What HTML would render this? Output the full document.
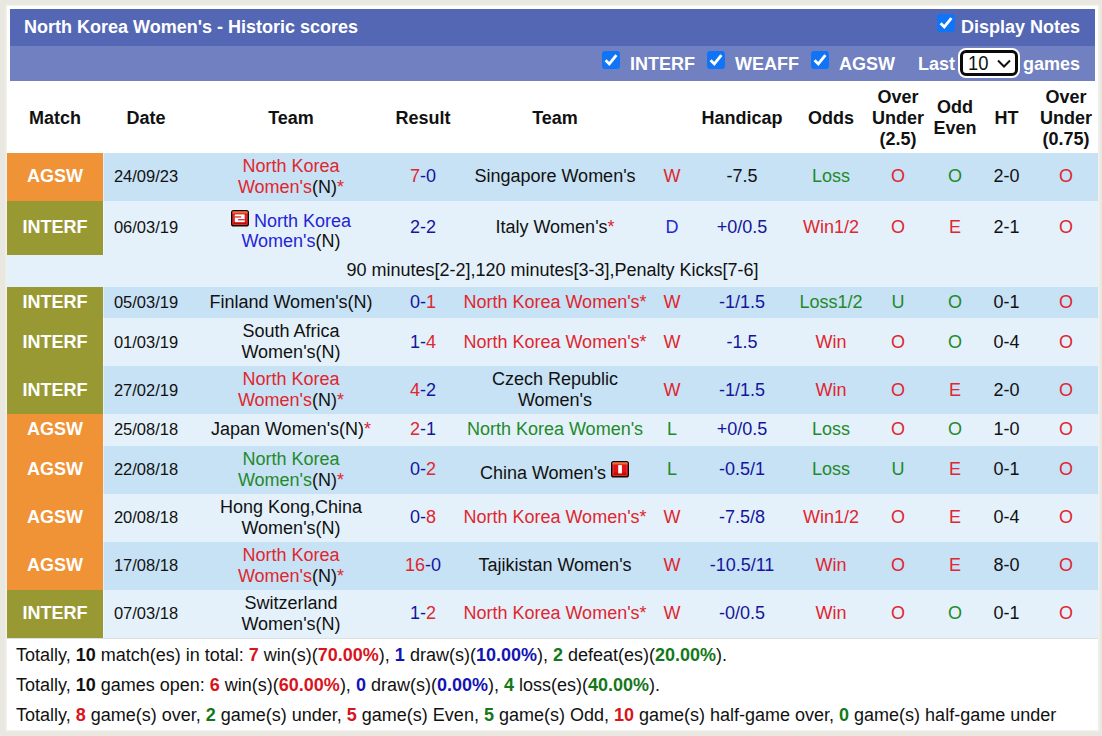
<!DOCTYPE html>
<html>
<head>
<meta charset="utf-8">
<title>North Korea Women's - Historic scores</title>
<style>
html,body{margin:0;padding:0;}
body{width:1102px;height:736px;overflow:hidden;background:#e9e8e0;font-family:"Liberation Sans",sans-serif;font-size:18px;color:#111;position:relative;}
#wrap{position:absolute;left:7px;top:6px;width:1091px;height:724px;background:#fff;box-shadow:0 0 0 1.5px #f1f0ea;}
#bar1{position:absolute;left:3px;top:3px;width:1085px;height:37px;background:#5467b5;}
#bar2{position:absolute;left:3px;top:40px;width:1085px;height:35px;background:#7080c1;}
.hb{position:absolute;color:#fff;font-weight:bold;font-size:18px;line-height:21px;white-space:nowrap;}
.cb{position:absolute;width:18px;height:18px;border-radius:3px;background:#1074f6;}
.cb svg{position:absolute;left:0;top:0;}
#sel{position:absolute;box-sizing:border-box;left:953px;top:43.6px;width:58px;height:26.6px;border:3px solid #0a0a0a;border-radius:6px;background:#fff;box-shadow:0 0 0 2px #fff;}
#sel span{position:absolute;left:4.8px;top:-1px;font-size:20px;line-height:23px;color:#111;display:inline-block;transform-origin:0 50%;transform:scaleX(0.92);}
#sel svg{position:absolute;left:33px;top:5px;}
table{position:absolute;left:0;top:75px;width:1091px;border-collapse:collapse;table-layout:fixed;}
td,th{padding:0;text-align:center;vertical-align:middle;line-height:21px;white-space:nowrap;overflow:visible;}
th{font-weight:bold;font-size:18px;color:#111;padding-top:2px;}
tr.u td{padding-bottom:2px;}
tr.u td.t2{padding-bottom:0;}
tr.h{height:72px;}
tr.a td{background:#c7e1f5;}
tr.b td{background:#e4f1fb;}
td.lg{color:#fff;font-weight:bold;}
tr td.ag{background:#f09236;}
tr td.in{background:#999933;}
td.d{font-size:16.5px;box-shadow:inset 1px 0 0 rgba(255,255,255,0.45);}
.r{color:#e0262e;}
.bl{color:#15159c;}
.bb{color:#2424d6;}
.g{color:#1f8a2a;}
.k{color:#111;}
#sum{position:absolute;left:9px;top:634px;font-size:18px;line-height:30px;color:#111;white-space:nowrap;}
#sum b.r{color:#d8141c;} #sum b.bl{color:#1414b4;} #sum b.g{color:#14781a;}
.ic{display:inline-block;width:18px;height:1px;position:relative;vertical-align:baseline;}
.ic svg{position:absolute;left:0;bottom:0.5px;}
.r2{display:block;line-height:20px;position:relative;top:3px;}
.r7{display:block;position:relative;top:4px;left:-0.5px;}
</style>
</head>
<body>
<div id="wrap">

<div id="bar1"></div>
<div id="bar2"></div>
<div class="hb" style="left:17px;top:11px;">North Korea Women's - Historic scores</div>

<div class="cb" style="left:930px;top:7.5px;height:18.5px;"><svg width="18" height="18" viewBox="0 0 18 18"><path d="M3.6 9.3 L7.3 12.9 L14.4 4.2" fill="none" stroke="#fff" stroke-width="2.8"/></svg></div>
<div class="hb" style="left:954px;top:11px;">Display Notes</div>

<div class="cb" style="left:595px;top:45px;"><svg width="18" height="18" viewBox="0 0 18 18"><path d="M3.6 9.3 L7.3 12.9 L14.4 4.2" fill="none" stroke="#fff" stroke-width="2.8"/></svg></div>
<div class="hb" style="left:623px;top:48px;">INTERF</div>
<div class="cb" style="left:700px;top:45px;"><svg width="18" height="18" viewBox="0 0 18 18"><path d="M3.6 9.3 L7.3 12.9 L14.4 4.2" fill="none" stroke="#fff" stroke-width="2.8"/></svg></div>
<div class="hb" style="left:728px;top:48px;">WEAFF</div>
<div class="cb" style="left:804px;top:45px;"><svg width="18" height="18" viewBox="0 0 18 18"><path d="M3.6 9.3 L7.3 12.9 L14.4 4.2" fill="none" stroke="#fff" stroke-width="2.8"/></svg></div>
<div class="hb" style="left:832px;top:48px;">AGSW</div>
<div class="hb" style="left:911px;top:48px;">Last</div>
<div id="sel"><span>10</span><svg width="16" height="12" viewBox="0 0 16 12"><path d="M2 2.5 L8 8.5 L14 2.5" fill="none" stroke="#111" stroke-width="2"/></svg></div>
<div class="hb" style="left:1016px;top:48px;">games</div>

<table>
<colgroup>
<col style="width:96px"><col style="width:86px"><col style="width:204px"><col style="width:60px"><col style="width:204px"><col style="width:30px"><col style="width:110px"><col style="width:68px"><col style="width:66px"><col style="width:48px"><col style="width:55px"><col style="width:64px">
</colgroup>
<tr class="h"><th>Match</th><th>Date</th><th>Team</th><th>Result</th><th>Team</th><th></th><th>Handicap</th><th>Odds</th><th>Over<br>Under<br>(2.5)</th><th>Odd<br>Even</th><th>HT</th><th>Over<br>Under<br>(0.75)</th></tr>

<tr class="a u" style="height:48px"><td class="lg ag">AGSW</td><td class="d">24/09/23</td><td class="t2"><span class="r">North Korea<br>Women's</span>(N)<span class="r">*</span></td><td><span class="r">7</span><span class="bl">-0</span></td><td>Singapore Women's</td><td class="r">W</td><td>-7.5</td><td class="g">Loss</td><td class="r">O</td><td class="g">O</td><td>2-0</td><td class="r">O</td></tr>

<tr class="b u" style="height:54px"><td class="lg in">INTERF</td><td class="d">06/03/19</td><td class="t2"><span class="r2"><span class="ic"><svg width="18" height="17" viewBox="0 0 18 17"><rect x="0" y="0" width="18" height="16.5" rx="2.6" fill="#160404"/><rect x="1.5" y="1.5" width="15" height="13.5" rx="0.8" fill="#e01616"/><rect x="1.5" y="1.5" width="15" height="1.1" fill="#f4a03c"/><rect x="1.5" y="2.6" width="15" height="0.9" fill="#ee5a2a"/><rect x="1.5" y="11.5" width="15" height="1.8" fill="#d00808"/><rect x="1.5" y="13.3" width="15" height="1.7" fill="#b80000"/><rect x="2" y="2" width="14" height="12.5" rx="0.6" fill="none" stroke="#ff9a8a" stroke-opacity="0.4" stroke-width="0.9"/><rect x="3.8" y="4.4" width="9.9" height="7.8" fill="#fff"/><rect x="3.8" y="6.4" width="6.4" height="1.1" fill="#c81010"/><rect x="7" y="9.2" width="6.7" height="1.1" fill="#c81010"/></svg></span> <span class="bb">North Korea<br>Women's</span>(N)</span></td><td><span class="bl">2-2</span></td><td>Italy Women's<span class="r">*</span></td><td class="bb">D</td><td class="bl">+0/0.5</td><td class="r">Win1/2</td><td class="r">O</td><td class="r">E</td><td>2-1</td><td class="r">O</td></tr>

<tr class="b u" style="height:32px"><td colspan="12">90 minutes[2-2],120 minutes[3-3],Penalty Kicks[7-6]</td></tr>

<tr class="a" style="height:31px"><td class="lg in">INTERF</td><td class="d">05/03/19</td><td>Finland Women's(N)</td><td><span class="bl">0-</span><span class="r">1</span></td><td class="r">North Korea Women's*</td><td class="r">W</td><td class="bl">-1/1.5</td><td class="g">Loss1/2</td><td class="g">U</td><td class="g">O</td><td>0-1</td><td class="r">O</td></tr>

<tr class="b" style="height:48px"><td class="lg in">INTERF</td><td class="d">01/03/19</td><td class="t2">South Africa<br>Women's(N)</td><td><span class="bl">1-</span><span class="r">4</span></td><td class="r">North Korea Women's*</td><td class="r">W</td><td class="bl">-1.5</td><td class="r">Win</td><td class="r">O</td><td class="g">O</td><td>0-4</td><td class="r">O</td></tr>

<tr class="a" style="height:48px"><td class="lg in">INTERF</td><td class="d">27/02/19</td><td class="t2"><span class="r">North Korea<br>Women's</span>(N)<span class="r">*</span></td><td><span class="r">4</span><span class="bl">-2</span></td><td class="t2">Czech Republic<br>Women's</td><td class="r">W</td><td class="bl">-1/1.5</td><td class="r">Win</td><td class="r">O</td><td class="r">E</td><td>2-0</td><td class="r">O</td></tr>

<tr class="b u" style="height:32px"><td class="lg ag">AGSW</td><td class="d">25/08/18</td><td>Japan Women's(N)<span class="r">*</span></td><td><span class="r">2</span><span class="bl">-1</span></td><td class="g">North Korea Women's</td><td class="g">L</td><td class="bl">+0/0.5</td><td class="g">Loss</td><td class="r">O</td><td class="g">O</td><td>1-0</td><td class="r">O</td></tr>

<tr class="a u" style="height:48px"><td class="lg ag">AGSW</td><td class="d">22/08/18</td><td class="t2"><span class="g">North Korea<br>Women's</span>(N)<span class="r">*</span></td><td><span class="bl">0-</span><span class="r">2</span></td><td><span class="r7">China Women's <span class="ic"><svg width="18" height="17" viewBox="0 0 18 17"><rect x="0" y="0" width="18" height="16.5" rx="2.6" fill="#160404"/><rect x="1.5" y="1.5" width="15" height="13.5" rx="0.8" fill="#e01616"/><rect x="1.5" y="1.5" width="15" height="1.1" fill="#f4a03c"/><rect x="1.5" y="2.6" width="15" height="0.9" fill="#ee5a2a"/><rect x="1.5" y="11.5" width="15" height="1.8" fill="#d00808"/><rect x="1.5" y="13.3" width="15" height="1.7" fill="#b80000"/><rect x="2" y="2" width="14" height="12.5" rx="0.6" fill="none" stroke="#ff9a8a" stroke-opacity="0.4" stroke-width="0.9"/><rect x="7.2" y="4.1" width="3.7" height="8.3" fill="#fff"/></svg></span></span></td><td class="g">L</td><td class="bl">-0.5/1</td><td class="g">Loss</td><td class="g">U</td><td class="r">E</td><td>0-1</td><td class="r">O</td></tr>

<tr class="b u" style="height:48px"><td class="lg ag">AGSW</td><td class="d">20/08/18</td><td class="t2">Hong Kong,China<br>Women's(N)</td><td><span class="bl">0-</span><span class="r">8</span></td><td class="r">North Korea Women's*</td><td class="r">W</td><td class="bl">-7.5/8</td><td class="r">Win1/2</td><td class="r">O</td><td class="r">E</td><td>0-4</td><td class="r">O</td></tr>

<tr class="a u" style="height:48px"><td class="lg ag">AGSW</td><td class="d">17/08/18</td><td class="t2"><span class="r">North Korea<br>Women's</span>(N)<span class="r">*</span></td><td><span class="r">16</span><span class="bl">-0</span></td><td>Tajikistan Women's</td><td class="r">W</td><td class="bl">-10.5/11</td><td class="r">Win</td><td class="r">O</td><td class="r">E</td><td>8-0</td><td class="r">O</td></tr>

<tr class="b u" style="height:48px"><td class="lg in">INTERF</td><td class="d">07/03/18</td><td class="t2">Switzerland<br>Women's(N)</td><td><span class="bl">1-</span><span class="r">2</span></td><td class="r">North Korea Women's*</td><td class="r">W</td><td class="bl">-0/0.5</td><td class="r">Win</td><td class="r">O</td><td class="g">O</td><td>0-1</td><td class="r">O</td></tr>
</table>

<div style="position:absolute;left:0;top:632px;width:1091px;height:1px;background:#dbe0e4;"></div>
<div id="sum">
Totally, <b>10</b> match(es) in total: <b class="r">7</b> win(s)(<b class="r">70.00%</b>), <b class="bl">1</b> draw(s)(<b class="bl">10.00%</b>), <b class="g">2</b> defeat(es)(<b class="g">20.00%</b>).<br>
Totally, <b>10</b> games open: <b class="r">6</b> win(s)(<b class="r">60.00%</b>), <b class="bl">0</b> draw(s)(<b class="bl">0.00%</b>), <b class="g">4</b> loss(es)(<b class="g">40.00%</b>).<br>
Totally, <b class="r">8</b> game(s) over, <b class="g">2</b> game(s) under, <b class="r">5</b> game(s) Even, <b class="g">5</b> game(s) Odd, <b class="r">10</b> game(s) half-game over, <b class="g">0</b> game(s) half-game under
</div>
</div>
</body>
</html>
